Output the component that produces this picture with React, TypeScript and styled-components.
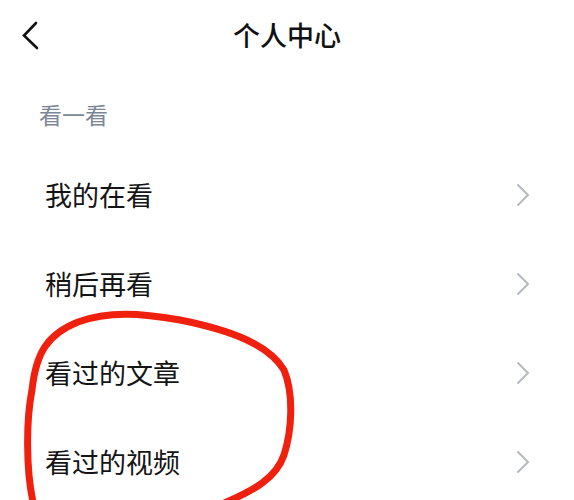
import React from 'react'
import styled, { createGlobalStyle } from 'styled-components'

const GlobalStyle = createGlobalStyle`
  html, body {
    margin: 0;
    padding: 0;
    background: #ffffff;
  }

  body {
    font-family: "Noto Sans CJK SC", "Noto Sans", sans-serif;
    color: #111111;
  }
`

const Page = styled.div`
  position: relative;
  width: 574px;
  height: 500px;
  overflow: hidden;
  background: #ffffff;
`

const Header = styled.div`
  display: grid;
  grid-template-columns: 60px 1fr 60px;
  align-items: center;
  height: 70px;
`

const BackButton = styled.div`
  display: flex;
  align-items: center;
  padding-left: 20px;
`

const Title = styled.h1`
  margin: 0;
  text-align: center;
  font-size: 27px;
  font-weight: 500;
  line-height: 32px;
  color: #111111;
`

const SectionLabel = styled.div`
  height: 80px;
  box-sizing: border-box;
  padding: 32px 0 0 39px;
  font-size: 23px;
  line-height: 24px;
  color: #7b8795;
`

const List = styled.ul`
  margin: 0;
  padding: 0;
  list-style: none;
`

const Row = styled.li`
  display: flex;
  align-items: center;
  justify-content: space-between;
  height: 89px;
  padding: 0 44px 0 45px;
`

const RowLabel = styled.span`
  font-size: 27px;
  line-height: 32px;
  color: #141414;
`

const Annotation = styled.svg`
  position: absolute;
  left: 0;
  top: 0;
  pointer-events: none;
`

const ChevronLeft = () => (
  <svg width="20" height="30" viewBox="0 0 20 30">
    <path d="M16 3 L4 15.5 L17 28" fill="none" stroke="#111" strokeWidth="2.6" strokeLinecap="round" strokeLinejoin="miter" />
  </svg>
)

const ChevronRight = () => (
  <svg width="14" height="24" viewBox="0 0 14 24">
    <path d="M2 2 L12 12 L2 22" fill="none" stroke="#b6babf" strokeWidth="2" strokeLinecap="round" />
  </svg>
)

const items = ['我的在看', '稍后再看', '看过的文章', '看过的视频']

const App = () => {
  return (
    <Page>
      <GlobalStyle />
      <Header>
        <BackButton>
          <ChevronLeft />
        </BackButton>
        <Title>个人中心</Title>
        <div />
      </Header>

      <SectionLabel>看一看</SectionLabel>

      <List>
        {items.map((item) => (
          <Row key={item}>
            <RowLabel>{item}</RowLabel>
            <ChevronRight />
          </Row>
        ))}
      </List>

      <Annotation width="574" height="500" viewBox="0 0 574 500">
        <path
          d="M33 502 C26 470, 26 420, 32 390 C36 352, 48 334, 78 322 C108 311, 140 313, 180 320 C230 330, 268 344, 284 370 C294 394, 292 430, 284 455 C276 478, 255 490, 222 504"
          fill="none"
          stroke="#f0200f"
          strokeWidth="7"
          strokeLinecap="round"
        />
      </Annotation>
    </Page>
  )
}

export default App
